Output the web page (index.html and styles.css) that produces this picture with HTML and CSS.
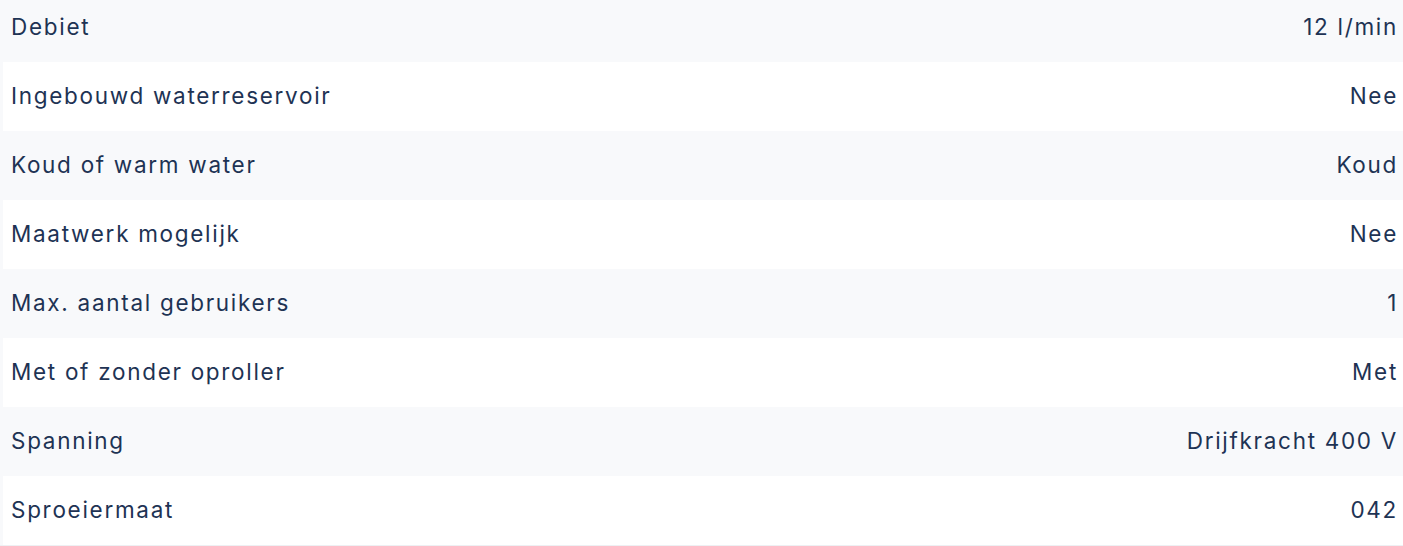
FILE: index.html
```html
<!DOCTYPE html>
<html lang="nl">
<head>
   <meta charset="UTF-8">
   <meta name="viewport" content="width=device-width, initial-scale=1.0">
   <title>Specificaties</title>
   <link rel="stylesheet" href="styles.css">
</head>
<body>
   <div class="specs">
      <div class="spec-row">
         <span class="spec-label">Debiet</span>
         <span class="spec-value">12 l/min</span>
      </div>
      <div class="spec-row">
         <span class="spec-label">Ingebouwd waterreservoir</span>
         <span class="spec-value">Nee</span>
      </div>
      <div class="spec-row">
         <span class="spec-label">Koud of warm water</span>
         <span class="spec-value">Koud</span>
      </div>
      <div class="spec-row">
         <span class="spec-label">Maatwerk mogelijk</span>
         <span class="spec-value">Nee</span>
      </div>
      <div class="spec-row">
         <span class="spec-label">Max. aantal gebruikers</span>
         <span class="spec-value">1</span>
      </div>
      <div class="spec-row">
         <span class="spec-label">Met of zonder oproller</span>
         <span class="spec-value">Met</span>
      </div>
      <div class="spec-row">
         <span class="spec-label">Spanning</span>
         <span class="spec-value">Drijfkracht 400 V</span>
      </div>
      <div class="spec-row">
         <span class="spec-label">Sproeiermaat</span>
         <span class="spec-value">042</span>
      </div>
   </div>
</body>
</html>
```
FILE: styles.css
```css
* {
   margin: 0;
   padding: 0;
   box-sizing: border-box;
}
body {
   background-color: #fff;
   font-family: Inter, 'Open Sans', sans-serif;
   color: #1e3354;
   overflow: hidden;
}
div.specs {
   margin-top: -7px;
   background-color: #f8f9fb;
   border-bottom: 1px solid #eef0f3;
}
div.spec-row {
   display: flex;
   justify-content: space-between;
   align-items: center;
   height: 69px;
   padding: 0 5px 2px 11px;
   font-size: 22.5px;
   letter-spacing: 1.7px;
}
div.spec-row:nth-child(even) {
   background-color: #fff;
   margin-left: 3px;
   padding-left: 8px;
}
```
